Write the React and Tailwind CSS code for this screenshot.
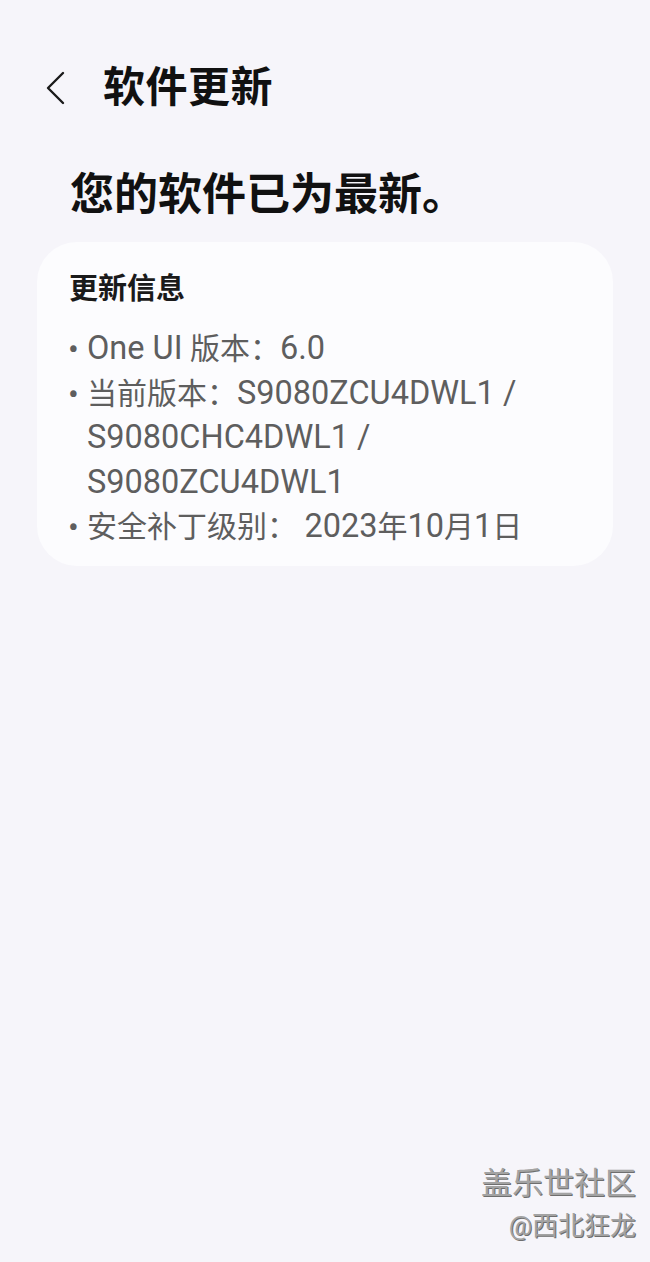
import React from "react";

const font = { fontFamily: 'Roboto, "Noto Sans CJK SC", sans-serif' };

function Mixed({ text }) {
  const parts = text.split(/([A-Za-z0-9./]+(?: [A-Za-z0-9./]+)*)/).filter((p) => p !== "");
  return (
    <>
      {parts.map((p, i) =>
        /[A-Za-z0-9]/.test(p) ? (
          <span key={i} className="text-[32.5px] leading-none">
            {p}
          </span>
        ) : (
          <span key={i}>{p}</span>
        )
      )}
    </>
  );
}

function Item({ lines }) {
  return (
    <li className="flex">
      <span className="w-[19px] shrink-0 text-[32px] leading-none pt-[6px]">•</span>
      <span>
        {lines.map((l, i) => (
          <div key={i}>
            <Mixed text={l} />
          </div>
        ))}
      </span>
    </li>
  );
}

export default function App() {
  return (
    <div className="w-[650px] h-[1262px] bg-[#f6f5fa] flex flex-col relative overflow-hidden" style={font}>
      <div className="flex items-center h-[60px] mt-[58px] pl-[45px]">
        <svg width="22" height="34" viewBox="0 0 22 34" className="mr-[36px]">
          <path d="M18 2 L3 17 L18 32" fill="none" stroke="#1a1a1a" strokeWidth="2.4" strokeLinecap="round" strokeLinejoin="round" />
        </svg>
        <div className="text-[42px] font-bold text-[#111] leading-none tracking-[0.5px]">软件更新</div>
      </div>
      <div className="pl-[70px] mt-[55px] text-[44px] font-bold text-[#111] leading-none">您的软件已为最新。</div>
      <div className="mx-[37px] mt-[25px] bg-[#fcfcfe] rounded-[40px] pl-[31px] pr-[20px] pt-[29px] pb-[16px]">
        <div className="text-[29px] font-semibold text-[#1a1a1a] leading-[36px] pl-[1px]">更新信息</div>
        <ul className="mt-[20px] text-[30px] text-[#5e5e5e] leading-[44.5px]">
          <Item lines={["One UI 版本：6.0"]} />
          <Item lines={["当前版本：S9080ZCU4DWL1 /", "S9080CHC4DWL1 /", "S9080ZCU4DWL1"]} />
          <Item lines={["安全补丁级别： 2023年10月1日"]} />
        </ul>
      </div>
      <div
        className="absolute right-[14px] top-[1164px] flex flex-col items-end text-[#a3a3a3]"
        style={{ textShadow: "1px 1px 0 #6e6e6e" }}
      >
        <div className="text-[31px] leading-[40px]">盖乐世社区</div>
        <div className="text-[26px] leading-[36px] mt-[4px]">@西北狂龙</div>
      </div>
    </div>
  );
}
